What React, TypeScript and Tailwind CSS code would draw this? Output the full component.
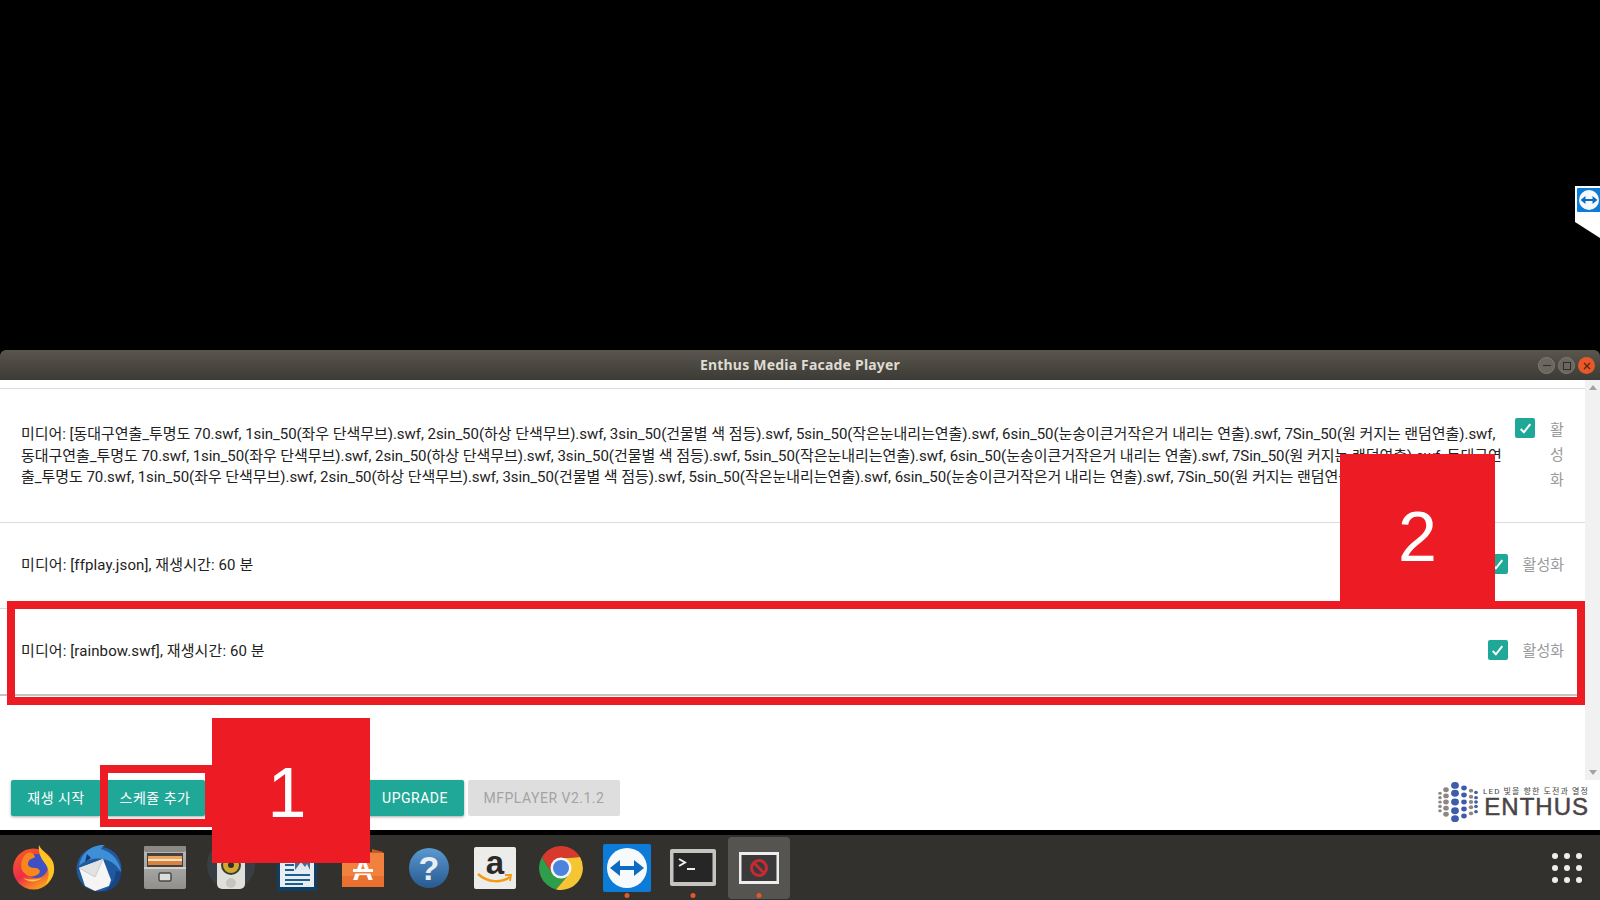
const line1 = "미디어: [동대구연출_투명도 70.swf, 1sin_50(좌우 단색무브).swf, 2sin_50(하상 단색무브).swf, 3sin_50(건물별 색 점등).swf, 5sin_50(작은눈내리는연출).swf, 6sin_50(눈송이큰거작은거 내리는 연출).swf, 7Sin_50(원 커지는 랜덤연출).swf,";
const line2 = "동대구연출_투명도 70.swf, 1sin_50(좌우 단색무브).swf, 2sin_50(하상 단색무브).swf, 3sin_50(건물별 색 점등).swf, 5sin_50(작은눈내리는연출).swf, 6sin_50(눈송이큰거작은거 내리는 연출).swf, 7Sin_50(원 커지는 랜덤연출).swf, 동대구연";
const line3 = "출_투명도 70.swf, 1sin_50(좌우 단색무브).swf, 2sin_50(하상 단색무브).swf, 3sin_50(건물별 색 점등).swf, 5sin_50(작은눈내리는연출).swf, 6sin_50(눈송이큰거작은거 내리는 연출).swf, 7Sin_50(원 커지는 랜덤연출).swf], 재생시간: 60 분";
const font = { fontFamily: 'Roboto, "Noto Sans CJK KR", sans-serif' };

function Check() {
  return (
    <div className="flex h-5 w-5 shrink-0 items-center justify-center rounded-[2px] bg-[#1fa898]">
      <svg width="15" height="15" viewBox="0 0 14 14" fill="none" stroke="#fff" strokeWidth="1.8">
        <path d="M2.5 7.5 L5.5 10.5 L11.5 3" />
      </svg>
    </div>
  );
}

function Row({ text, h, last }: { text: string; h: string; last?: boolean }) {
  return (
    <div className={"flex items-center justify-between pb-[1px] pl-[21px] pr-[21px] " + h + (last ? " border-b-2 border-[#c4c4c4]" : " border-b border-[#dcdcdc]")}>
      <span className="text-[15px] tracking-[0.1px] text-[#222]">{text}</span>
      <div className="flex items-center gap-[15px]">
        <div className="-translate-y-[1px]">
          <Check />
        </div>
        <span className="text-[15px] text-[#9a9a9a]">활성화</span>
      </div>
    </div>
  );
}

function Btn({ label, w, disabled }: { label: string; w: string; disabled?: boolean }) {
  return (
    <div
      className={
        "flex h-9 items-center justify-center rounded-[2px] text-[14px] tracking-[0.5px] " +
        w +
        (disabled
          ? " bg-[#dedede] text-[#a3a3a3]"
          : " bg-[#1fa898] text-white shadow-[0_1px_3px_rgba(0,0,0,0.35)]")
      }
    >
      {label}
    </div>
  );
}

function Dot() {
  return <div className="absolute bottom-[1px] left-1/2 h-[5px] w-[5px] -translate-x-1/2 rounded-full bg-[#e0592a]" />;
}

function Firefox() {
  return (
    <svg width="43" height="45" viewBox="0 0 43 45">
      <defs>
        <linearGradient id="ffBody" x1="0" y1="0" x2="0.6" y2="1">
          <stop offset="0" stopColor="#f7641f" />
          <stop offset="0.6" stopColor="#ee2c4a" />
          <stop offset="1" stopColor="#f9a01b" />
        </linearGradient>
      </defs>
      <circle cx="21.5" cy="24" r="20.5" fill="url(#ffBody)" />
      <circle cx="24" cy="21" r="12" fill="#3f4fc4" />
      <path d="M27 0 C30 7 37 9 41 17 C44 26 41 34 33 40 C38 32 38 24 32 17 C28 12 26 6 27 0Z" fill="#fcc522" />
      <path d="M14 9 C18 6 22 8 23 12 C20 14 17 14 16 18 C15 22 20 23 24 23 C29 24 29 28 25 30 C20 33 13 31 10 25 C8 19 10 13 14 9Z" fill="#f9861c" />
      <path d="M30 33 C25 37 17 38 11 33 C17 35 24 35 30 33Z" fill="#fdd13a" />
    </svg>
  );
}

function Thunderbird() {
  return (
    <svg width="48" height="48" viewBox="0 0 48 48">
      <circle cx="24" cy="25" r="22.5" fill="#20599f" />
      <path d="M4 22 C6 10 16 0 30 1 C27 3 26 4 26 5 C37 8 45 17 46 28 C40 18 30 13 18 15 C12 16 8 18 4 22Z" fill="#3f8fd6" />
      <path d="M46 28 C47 38 38 47 28 48 C35 43 40 37 41 27Z" fill="#164582" />
      <path d="M4 24 L28 15 L36 36 L34 42 L20 47 L10 42Z" fill="#f5f5f5" />
      <path d="M4 24 L20 33 L28 15" fill="#e2e2e2" stroke="#bdbdbd" strokeWidth="0.7" />
      <path d="M12 10 L16 14 L10 18Z" fill="#123a6d" />
    </svg>
  );
}

function Files() {
  return (
    <svg width="42" height="43" viewBox="0 0 42 43">
      <defs>
        <linearGradient id="drawer" x1="0" y1="0" x2="0" y2="1">
          <stop offset="0" stopColor="#bdbdbb" />
          <stop offset="1" stopColor="#8f8f8c" />
        </linearGradient>
      </defs>
      <rect width="42" height="43" rx="2" fill="url(#drawer)" />
      <rect x="0" y="0" width="42" height="6" rx="2" fill="#8b8986" />
      <rect x="3" y="7" width="36" height="14" fill="#44403b" />
      <rect x="4" y="10" width="34" height="3" fill="#f0a35a" />
      <rect x="4" y="13" width="34" height="2" fill="#f4e3c6" />
      <rect x="4" y="15" width="34" height="4" fill="#d98241" />
      <rect x="0" y="21" width="42" height="2" fill="#d2d2d0" />
      <rect x="15" y="27" width="12" height="8" rx="1.5" fill="#dcdcdc" stroke="#4a4a4a" strokeWidth="1.5" />
    </svg>
  );
}

function Speaker() {
  return (
    <svg width="48" height="54" viewBox="0 0 48 54">
      <circle cx="24" cy="24" r="24" fill="#3d4a58" opacity="0.55" />
      <rect x="10" y="2" width="28" height="46" rx="5" fill="#e0e0da" />
      <circle cx="24" cy="24" r="10" fill="#3a3a38" />
      <circle cx="24" cy="24" r="8" fill="#cfa92c" />
      <circle cx="24" cy="24" r="3" fill="#2f2f2f" />
      <circle cx="24" cy="42" r="5" fill="#c6c6c0" />
    </svg>
  );
}

function Writer() {
  return (
    <svg width="40" height="47" viewBox="0 0 40 47">
      <rect width="40" height="47" fill="#113f63" />
      <rect x="3" y="1" width="34" height="42" fill="#e8edf1" />
      <rect x="8" y="20" width="9" height="2" fill="#1d5f8f" />
      <rect x="8" y="25" width="9" height="2" fill="#1d5f8f" />
      <rect x="8" y="30" width="25" height="2" fill="#1d5f8f" />
      <rect x="8" y="35" width="25" height="2" fill="#1d5f8f" />
      <rect x="8" y="39" width="18" height="2" fill="#1d5f8f" />
      <rect x="18" y="12" width="15" height="14" fill="#3e6f93" />
      <path d="M18 26 L24 18 L28 23 L30 20 L33 26Z" fill="#dfe8ee" />
    </svg>
  );
}

function Store() {
  return (
    <svg width="42" height="38" viewBox="0 0 42 38">
      <path d="M30 0 L41 3 L42 6 H0 V3 H30Z" fill="#c95a26" />
      <rect x="0" y="4" width="42" height="34" fill="#f0813f" />
      <rect x="0" y="27" width="42" height="11" fill="#e9702e" />
      <text x="21" y="31" textAnchor="middle" fontSize="29" fontWeight="700" fill="#fff" fontFamily="Liberation Sans">A</text>
      <rect x="11" y="20" width="20" height="3" fill="#fff" />
      <rect x="12" y="23" width="18" height="1.5" fill="#f0813f" />
    </svg>
  );
}

function Help() {
  return (
    <div
      className="flex h-10 w-10 items-center justify-center rounded-full bg-gradient-to-b from-[#5a9ad2] to-[#28598f] text-[34px] font-bold leading-none text-[#e8eef4]"
      style={{ fontFamily: '"Liberation Sans", sans-serif' }}
    >
      ?
    </div>
  );
}

function Amazon() {
  return (
    <svg width="42" height="42" viewBox="0 0 42 42">
      <rect width="42" height="42" rx="2" fill="#ececea" />
      <text x="21" y="27" textAnchor="middle" fontSize="33" fontWeight="700" fill="#2a2a2a" fontFamily="Liberation Sans">a</text>
      <path d="M4 27 C14 36 27 36 36 30" fill="none" stroke="#f39c12" strokeWidth="2.5" />
      <path d="M31 28 L37 28 L36 34" fill="none" stroke="#f39c12" strokeWidth="1.8" />
    </svg>
  );
}

function Chrome() {
  return (
    <svg width="44" height="44" viewBox="0 0 44 44">
      <path d="M3 11 A22 22 0 0 0 17 43.4 L31 27 L13 27Z" fill="#2f9e4a" />
      <path d="M41 11 A22 22 0 0 1 17 43.4 L31 27 L22 12Z" fill="#f6c533" />
      <path d="M22 12 L41 11 A22 22 0 0 0 3 11 L13 27Z" fill="#d8392d" />
      <circle cx="22" cy="22" r="10.5" fill="#f5f5f5" />
      <circle cx="22" cy="22" r="8" fill="#4a84dc" />
    </svg>
  );
}

function TeamViewerMark({ size }: { size: number }) {
  return (
    <svg width={size} height={size} viewBox="0 0 48 48">
      <rect width="48" height="48" rx="2" fill="#0d7bd8" />
      <circle cx="24" cy="24" r="20" fill="#f7fafd" />
      <path d="M7 24 L17 16 V22 H31 V16 L41 24 L31 32 V26 H17 V32Z" fill="#0d6cc2" />
    </svg>
  );
}

function Terminal() {
  return (
    <svg width="46" height="37" viewBox="0 0 46 37">
      <rect width="46" height="37" rx="2" fill="#c4c4c0" />
      <rect x="3.5" y="4" width="39" height="29" fill="#262626" />
      <path d="M9 10 L15 13.5 L9 17" fill="none" stroke="#eee" strokeWidth="2" />
      <rect x="17" y="19" width="8" height="2" fill="#eee" />
    </svg>
  );
}

function Blocked() {
  return (
    <svg width="40" height="32" viewBox="0 0 40 32">
      <rect width="40" height="32" fill="#eeeeee" />
      <rect x="2.5" y="3" width="35" height="26" fill="#3a3a3a" />
      <circle cx="20" cy="16" r="7.5" fill="none" stroke="#c62b33" strokeWidth="3" />
      <path d="M15 11 L25 21" stroke="#c62b33" strokeWidth="3" />
    </svg>
  );
}

function Logo() {
  const cols = [
    { x: 3, ys: [14, 19, 24, 29, 34], r: 1.8, c: "#8d8784" },
    { x: 9, ys: [10, 17, 24, 31, 38], r: 2.8, c: "#8d8784" },
    { x: 18, ys: [5, 14, 24, 34, 43], r: 3.9, c: "#3f5cab" },
    { x: 27, ys: [8, 16, 24, 32, 40], r: 2.8, c: "#3f5cab" },
    { x: 34, ys: [11, 18, 24, 30, 37], r: 2.2, c: "#8d8784" },
    { x: 39, ys: [13, 19, 24, 29, 35], r: 1.9, c: "#3f5cab" },
  ];
  return (
    <div className="mt-[1px] flex items-center gap-[4px]">
      <svg width="42" height="42" viewBox="0 0 42 48" preserveAspectRatio="none">
        {cols.map((col) => col.ys.map((y) => <circle key={col.x + "-" + y} cx={col.x} cy={y} r={col.r} fill={col.c} />))}
      </svg>
      <div className="flex flex-col items-end">
        <span className="text-[8px] leading-[10px] tracking-[1.1px] text-[#444]">LED 빛을 향한 도전과 열정</span>
        <span className="text-[24px] leading-[20px] tracking-[1px] text-[#4a4446] [-webkit-text-stroke:0.5px_#4a4446]" style={{ fontFamily: '"Liberation Sans", sans-serif' }}>
          ENTHUS
        </span>
      </div>
    </div>
  );
}

export default function App() {
  return (
    <div className="relative h-[900px] w-[1600px] overflow-hidden bg-black" style={font}>
      <div className="h-[350px] bg-black" />

      {/* 팀뷰어 탭 */}
      <div className="absolute right-0 top-[186px] h-[52px] w-[25px] bg-white p-[2px] [clip-path:polygon(0_0,100%_0,100%_100%,0_69%)]">
        <TeamViewerMark size={24} />
      </div>

      <div className="relative flex h-[30px] items-center justify-center rounded-t-[6px] bg-gradient-to-b from-[#5a564e] to-[#3d3b36] pb-[1px]">
        <span className="text-[14px] font-bold tracking-[0.2px] text-[#dfdbd2]" style={{ fontFamily: '"Noto Sans", sans-serif' }}>
          Enthus Media Facade Player
        </span>
        <div className="absolute right-[5px] top-[7px] flex items-center gap-[3px]">
          <div className="flex h-[17px] w-[17px] items-center justify-center rounded-full border border-[#7d7a72] bg-[#6a675f]">
            <div className="h-[1px] w-[8px] bg-[#2f2d29]" />
          </div>
          <div className="flex h-[17px] w-[17px] items-center justify-center rounded-full border border-[#7d7a72] bg-[#6a675f]">
            <div className="h-[8px] w-[8px] border border-[#2f2d29]" />
          </div>
          <div className="flex h-[17px] w-[17px] items-center justify-center rounded-full bg-[#e8592a]">
            <svg width="8" height="8" viewBox="0 0 8 8" stroke="#5a2410" strokeWidth="1.3">
              <path d="M1 1 L7 7 M7 1 L1 7" />
            </svg>
          </div>
        </div>
      </div>

      <div className="flex h-[400px] bg-white">
        <div className="min-w-0 flex-1 pt-2">
          <div className="flex h-[135px] items-center border-y border-[#dcdcdc] pl-[21px]">
            <div className="w-[1494px] shrink-0 pt-[2px] text-[15px] leading-[21.7px] tracking-[-0.05px] text-[#222]">
              <div className="whitespace-nowrap">{line1}</div>
              <div className="whitespace-nowrap">{line2}</div>
              <div className="whitespace-nowrap">{line3}</div>
            </div>
            <div className="flex items-start gap-[12px]">
              <Check />
              <span className="w-[20px] text-center text-[15px] leading-[25px] text-[#9a9a9a]">활 성 화</span>
            </div>
          </div>
          <Row text="미디어: [ffplay.json], 재생시간: 60 분" h="h-[86px]" />
          <Row text="미디어: [rainbow.swf], 재생시간: 60 분" h="h-[87px]" last />
        </div>
        <div className="flex w-[15px] flex-col items-center justify-between bg-[#f1f1f1] py-[5px]">
          <div className="h-0 w-0 border-x-[4px] border-b-[5px] border-x-transparent border-b-[#a3a3a3]" />
          <div className="h-0 w-0 border-x-[4px] border-t-[5px] border-x-transparent border-t-[#a3a3a3]" />
        </div>
      </div>

      <div className="flex h-[50px] items-start justify-between bg-white pl-[11px] pr-[11px]">
        <div className="flex gap-[4px]">
          <Btn label="재생 시작" w="w-[90px]" />
          <Btn label="스케쥴 추가" w="w-[100px]" />
          <Btn label="" w="w-[153px]" />
          <Btn label="UPGRADE" w="w-[98px]" />
          <Btn label="MFPLAYER V2.1.2" w="w-[152px]" disabled />
        </div>
        <Logo />
      </div>

      <div className="h-[5px] bg-black" />
      <div className="flex h-[65px] items-center bg-[#33312e]">
        <div className="flex">
          {[<Firefox />, <Thunderbird />, <Files />, <Speaker />, <Writer />, <Store />, <Help />, <Amazon />, <Chrome />, <TeamViewerMark size={48} />, <Terminal />, <Blocked />].map((icon, i) => (
            <div key={i} className="flex w-[66px] justify-center">
              <div className={"relative flex h-[62px] w-[62px] items-center justify-center rounded-[4px] " + (i === 11 ? "bg-[#565451]" : "")}>
                {icon}
                {i >= 9 && <Dot />}
              </div>
            </div>
          ))}
        </div>
        <div className="ml-auto mr-[18px] grid grid-cols-3 gap-[6px]">
          {Array.from({ length: 9 }).map((_, i) => (
            <div key={i} className="h-[6px] w-[6px] rounded-full bg-[#eeeeee]" />
          ))}
        </div>
      </div>

      {/* 안내용 빨간 표시 */}
      <div className="absolute left-[7px] top-[601px] h-[104px] w-[1578px] border-[8px] border-[#ed1c24]" />
      <div className="absolute left-[100px] top-[765px] h-[62px] w-[113px] border-[8px] border-[#ed1c24]" />
      <div className="absolute left-[212px] top-[718px] flex h-[145px] w-[158px] items-center justify-center bg-[#ed1c24] pr-[8px] pt-[6px] text-[70px] text-white" style={{ fontFamily: '"Liberation Sans", sans-serif' }}>
        1
      </div>
      <div className="absolute left-[1340px] top-[454px] flex h-[147px] w-[155px] items-center justify-center bg-[#ed1c24] pt-[20px] text-[70px] text-white" style={{ fontFamily: '"Liberation Sans", sans-serif' }}>
        2
      </div>
    </div>
  );
}
